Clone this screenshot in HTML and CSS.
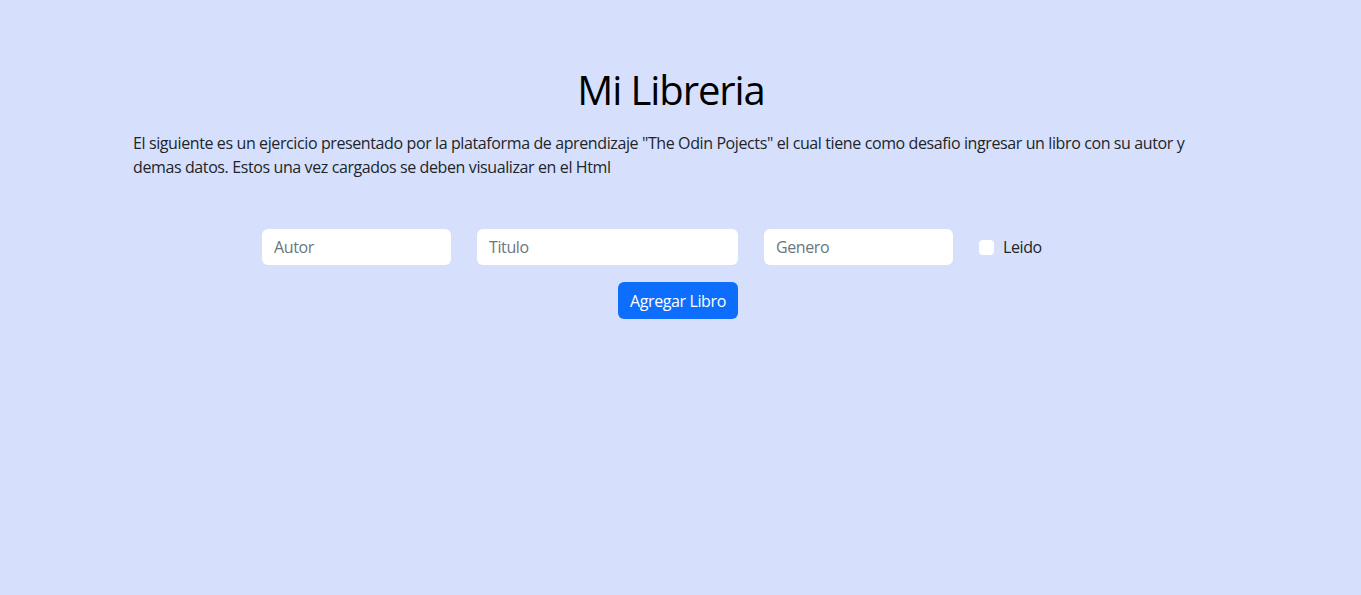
FILE: index.html
```html
<!DOCTYPE html>
<html lang="es">
<head>
<meta charset="utf-8">
<title>Mi Libreria</title>
<link rel="stylesheet" href="styles.css">
</head>
<body>
<main class="page">
  <header class="intro">
    <h1 class="title">Mi Libreria</h1>
    <p class="lead-text">El siguiente es un ejercicio presentado por la plataforma de aprendizaje "The Odin Pojects" el cual tiene como desafio ingresar un libro con su autor y demas datos. Estos una vez cargados se deben visualizar en el Html</p>
  </header>
  <form class="book-form">
    <div class="fields">
      <input class="field field-sm" type="text" placeholder="Autor">
      <input class="field field-lg" type="text" placeholder="Titulo">
      <input class="field field-sm" type="text" placeholder="Genero">
      <label class="check">
        <input class="check-box" type="checkbox">
        <span class="check-label">Leido</span>
      </label>
    </div>
    <div class="actions">
      <button class="btn-primary" type="button">Agregar Libro</button>
    </div>
  </form>
</main>
</body>
</html>
```
FILE: styles.css
```css
html, body {
  margin: 0;
  padding: 0;
}
body {
  background: #d6e0fd;
  font-family: "Open Sans", "Noto Sans", sans-serif;
  font-size: 16px;
  line-height: 1.5;
  color: #212529;
  letter-spacing: -0.39px;
  min-height: 595px;
}
.page {
  width: 1076px;
  margin-left: 133px;
  padding-top: 66px;
}
.intro {
  display: flex;
  flex-direction: column;
}
.title {
  margin: 0 0 17px;
  font-size: 40px;
  font-weight: 400;
  line-height: 48px;
  letter-spacing: -1.1px;
  text-align: center;
  color: #000;
}
.lead-text {
  margin: 0;
  font-size: 16px;
  line-height: 24px;
}
.book-form {
  margin-top: 50px;
  display: flex;
  flex-direction: column;
  gap: 17px;
}
.fields {
  display: flex;
  align-items: center;
  gap: 26px;
  padding-left: 129px;
}
.field {
  box-sizing: border-box;
  height: 36px;
  border: 0;
  border-radius: 6px;
  background: #fff;
  padding: 0 12px;
  font-family: inherit;
  font-size: 16px;
  letter-spacing: -0.39px;
  color: #212529;
  outline: none;
}
.field::placeholder {
  color: #6c757d;
}
.field-sm { width: 189px; }
.field-lg { width: 261px; }
.check {
  display: flex;
  align-items: center;
  gap: 9px;
}
.check-box {
  appearance: none;
  margin: 0;
  width: 15px;
  height: 15px;
  border-radius: 4px;
  background: #fff;
  border: 0;
}
.check-label {
  font-size: 16px;
  color: #212529;
}
.actions {
  display: flex;
  padding-left: 485px;
}
.btn-primary {
  box-sizing: border-box;
  height: 37px;
  border: 0;
  border-radius: 6px;
  background: #0d6efd;
  color: #fff;
  font-family: inherit;
  font-size: 16px;
  letter-spacing: -0.39px;
  white-space: nowrap;
  padding: 0 12px;
}
```
